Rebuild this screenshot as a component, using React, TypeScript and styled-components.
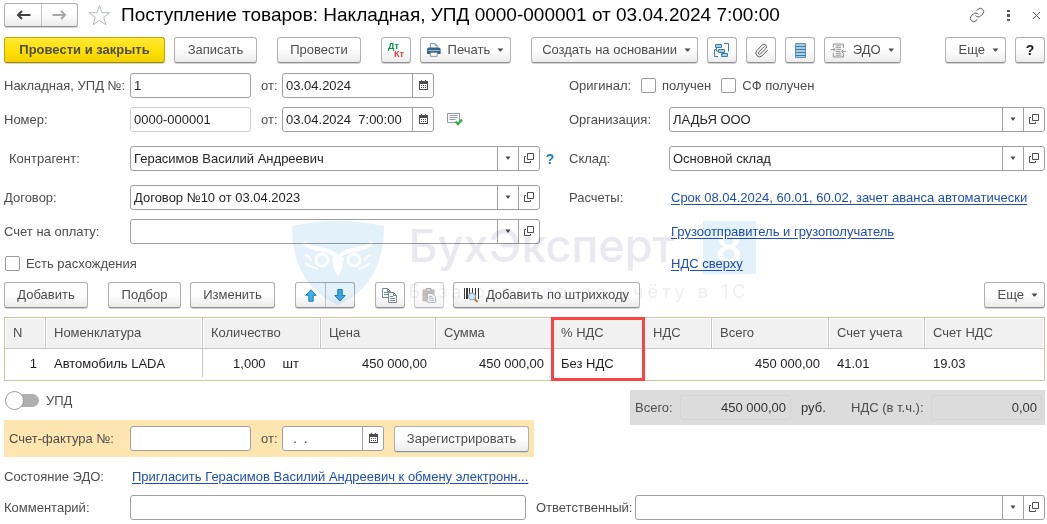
import React from "react";
import styled, { createGlobalStyle, css } from "styled-components";
import { Link as LinkGlyph, Paperclip } from "lucide-react";

const GlobalStyle = createGlobalStyle`
  *, *::before, *::after { box-sizing: border-box; }
  body {
    margin: 0;
    background: #fff;
    color: #4d4d4d;
    font: 13px/16px "Liberation Sans", Arial, sans-serif;
  }
  button, input { font: inherit; color: inherit; margin: 0; }
`;

/* ---------- layout ---------- */

const Page = styled.main`
  position: relative;
  padding: 3px 2px 4px 4px;
`;

const Bar = styled.div<{ $top?: number }>`
  display: flex;
  align-items: center;
  margin-top: ${(p) => p.$top ?? 0}px;
`;

const Group = styled.div<{ $after?: number }>`
  display: flex;
  gap: 9px;
  margin-right: ${(p) => p.$after ?? 20}px;
`;

const Spacer = styled.div`
  flex: 1;
`;

const Columns = styled.div`
  display: grid;
  grid-template-columns: minmax(0, 565fr) minmax(0, 476fr);
  margin-top: 10px;
`;

const Row = styled.div<{ $top?: number }>`
  display: flex;
  align-items: center;
  height: 25px;
  margin-top: ${(p) => p.$top ?? 0}px;
`;

const Label = styled.label<{ $width?: number; $indent?: boolean }>`
  flex: none;
  width: ${(p) => (p.$width ? `${p.$width}px` : "auto")};
  padding-left: ${(p) => (p.$indent ? 5 : 0)}px;
  white-space: nowrap;
`;

const FromLabel = styled(Label)`
  width: 31px;
  padding-left: 10px;
`;

/* ---------- buttons ---------- */

const Button = styled.button<{ $width?: number; $primary?: boolean }>`
  display: inline-flex;
  flex: none;
  align-items: center;
  justify-content: center;
  gap: 7px;
  width: ${(p) => p.$width ?? 30}px;
  height: 26px;
  padding: 0;
  border: 1px solid #b0b0b0;
  border-bottom-color: #8f8f8f;
  border-radius: 3px;
  background: linear-gradient(#fff 45%, #ececec);
  box-shadow: 0 1px 0 #d4d4d4;
  white-space: nowrap;
  &:disabled { opacity: 0.6; }
  ${(p) =>
    p.$primary &&
    css`
      border-color: #c4a800;
      border-bottom-color: #a08a00;
      background: linear-gradient(#ffe936, #ffdf00 60%, #f0d000);
      font-weight: bold;
    `}
`;

const MenuButton = styled(Button)`
  justify-content: flex-end;
  padding: 0 6px;
`;

const Segments = styled.div<{ $tall?: boolean }>`
  display: flex;
  height: ${(p) => (p.$tall ? 26 : 24)}px;
  border: 1px solid #b0b0b0;
  border-bottom-color: #8f8f8f;
  border-radius: 3px;
  background: linear-gradient(#fff 45%, #ececec);
  box-shadow: 0 1px 0 #d4d4d4;
`;

const Segment = styled.button<{ $width: number }>`
  display: flex;
  align-items: center;
  justify-content: center;
  width: ${(p) => p.$width}px;
  padding: 0;
  border: 0;
  background: none;
  & + & { border-left: 1px solid #c4c4c4; }
`;

const PlainButton = styled.button`
  display: flex;
  align-items: center;
  justify-content: center;
  padding: 0;
  border: 0;
  background: none;
`;

const StarButton = styled(PlainButton)`
  margin: 0 10px;
`;

const StatusButton = styled(PlainButton)`
  margin-left: 13px;
`;

const HelpButton = styled(PlainButton)`
  width: 20px;
  color: #1a7bb9;
  font-size: 14px;
  font-weight: bold;
`;

const WindowTools = styled.div`
  display: flex;
  align-items: center;
  gap: 19px;
  padding-right: 4px;
`;

const Title = styled.h1`
  margin: 0;
  color: #000;
  font-size: 19px;
  line-height: 24px;
  font-weight: normal;
  white-space: nowrap;
`;

const Question = styled.span`
  color: #1a1a1a;
  font-size: 14px;
  font-weight: bold;
`;

const DebitCredit = styled.span`
  display: grid;
  width: 16px;
  color: #009646;
  font-size: 9px;
  line-height: 8px;
  font-weight: bold;
  text-align: left;
  span { color: #e0393e; text-align: right; }
`;

/* ---------- fields ---------- */

const FieldBox = styled.div<{ $width?: number; $muted?: boolean }>`
  display: flex;
  flex: ${(p) => (p.$width ? "none" : "1 1 0")};
  width: ${(p) => (p.$width ? `${p.$width}px` : "auto")};
  min-width: 0;
  height: 25px;
  border: 1px solid ${(p) => (p.$muted ? "#d2d2d2" : "#a0a0a0")};
  border-radius: 3px;
  background: #fff;
`;

const FieldInput = styled.input`
  flex: 1;
  min-width: 0;
  padding: 0 3px;
  border: 0;
  outline: 0;
  background: none;
  color: #262626;
`;

const FieldButton = styled.button`
  display: flex;
  flex: none;
  align-items: center;
  justify-content: center;
  width: 21px;
  padding: 0 0 2px;
  border: 0;
  border-left: 1px solid #a0a0a0;
  background: none;
`;

const Check = styled.input`
  appearance: none;
  flex: none;
  width: 15px;
  height: 15px;
  border: 1px solid #9a9a9a;
  border-radius: 2px;
  background: #fff;
`;

const CheckLabel = styled.label<{ $after?: number }>`
  display: flex;
  align-items: center;
  gap: 6px;
  margin-right: ${(p) => p.$after ?? 0}px;
  padding-left: 1px;
  white-space: nowrap;
`;

const Anchor = styled.a`
  padding-left: 2px;
  color: #1f4fb5;
  text-decoration: underline;
  text-underline-offset: 2px;
  white-space: nowrap;
`;

/* ---------- goods table ---------- */

const Goods = styled.table`
  width: 100%;
  margin-top: 9px;
  border: 1px solid #cdc6a6;
  border-collapse: separate;
  border-spacing: 0;
  table-layout: fixed;
`;

const HeadCell = styled.th<{ $marked?: boolean }>`
  position: relative;
  height: 31px;
  padding: 0 8px;
  border-right: 1px solid #c8c8c8;
  border-bottom: 1px solid #c8c8c8;
  background: #f1f1f1;
  box-shadow: inset 1px 1px 0 #fff, inset -1px 0 0 #fff;
  font-weight: normal;
  text-align: left;
  &:last-child { border-right: 0; }
  ${(p) =>
    p.$marked &&
    css`
      &::after {
        content: "";
        position: absolute;
        top: -1px;
        left: -2px;
        right: -1px;
        height: 64px;
        border: 3px solid #fc4343;
      }
    `}
`;

const Cell = styled.td<{ $right?: boolean; $ruled?: boolean }>`
  height: 31px;
  padding: 0 9px 2px 8px;
  color: #1f1f1f;
  text-align: ${(p) => (p.$right ? "right" : "left")};
  white-space: nowrap;
  ${(p) =>
    p.$ruled &&
    css`
      background: linear-gradient(#c8c8c8, #c8c8c8) right top / 1px 28px no-repeat;
    `}
`;

const Quantity = styled.span`
  display: flex;
  gap: 17px;
  justify-content: flex-end;
  padding-right: 13px;
`;

/* ---------- lower part ---------- */

const Lower = styled.div`
  display: flex;
  align-items: flex-start;
  justify-content: space-between;
  margin-top: 9px;
`;

const SwitchLabel = styled.label`
  display: flex;
  align-items: center;
  gap: 7px;
  height: 21px;
  padding-left: 1px;
`;

const Switch = styled.input`
  appearance: none;
  position: relative;
  display: flex;
  align-items: center;
  width: 34px;
  height: 19px;
  &::before {
    content: "";
    width: 34px;
    height: 13px;
    border-radius: 7px;
    background: #b0b0b0;
  }
  &::after {
    content: "";
    position: absolute;
    left: 0;
    width: 19px;
    height: 19px;
    border: 1px solid #a0a0a0;
    border-radius: 50%;
    background: #fff;
  }
`;

const InvoicePanel = styled.div`
  display: flex;
  align-items: center;
  height: 37px;
  margin-top: 9px;
  padding-right: 5px;
  background: #ffe6b0;
`;

const InvoiceAction = styled.div`
  display: flex;
  margin-left: 10px;
`;

const Totals = styled.div`
  display: flex;
  align-items: center;
  height: 35px;
  padding: 0 3px 0 5px;
  background: #dcdcdc;
`;

const TotalInput = styled.input`
  width: 111px;
  height: 25px;
  padding: 0 4px;
  border: 1px solid #d5d5d5;
  border-radius: 3px;
  background: none;
  color: #333;
  text-align: right;
`;

const Unit = styled.span`
  width: 60px;
  padding-left: 10px;
  color: #333;
`;

const Footer = styled.div`
  display: grid;
  grid-template-columns: minmax(0, 522fr) minmax(0, 509fr);
  gap: 10px;
  margin-top: 6px;
`;

/* ---------- watermark ---------- */

const Watermark = styled.div`
  position: absolute;
  top: 221px;
  left: 0;
  right: 0;
  display: flex;
  justify-content: center;
  gap: 25px;
  mix-blend-mode: multiply;
  pointer-events: none;
`;

const BrandText = styled.div`
  width: 347px;
  color: #e9e9ef;
  font-family: Inter, sans-serif;
`;

const BrandLine = styled.div`
  display: flex;
  justify-content: space-between;
  font-size: 45px;
  line-height: 49px;
  font-weight: 500;
  white-space: nowrap;
`;

const BrandDigit = styled.span`
  width: 53px;
  height: 53px;
  background: #e3f1fa;
  color: #fff;
  font-weight: 600;
  font-size: 42px;
  line-height: 53px;
  text-align: center;
`;

const Slogan = styled.div`
  margin-top: 4px;
  color: #efeff3;
  font-size: 18px;
  line-height: 28px;
  letter-spacing: 4px;
  white-space: nowrap;
`;

/* ---------- drawings ---------- */

const Caret = () => (
  <svg width="7" height="4" viewBox="0 0 7 4" aria-hidden="true">
    <path d="M0.500 0.500h6L4 3.500H3z" fill="#4d4d4d" />
  </svg>
);

const SmallCaret = () => (
  <svg width="6" height="4" viewBox="0 0 6 4" aria-hidden="true">
    <path d="M0.500 0.500h5L3.500 3.500h-1z" fill="#4d4d4d" />
  </svg>
);

const OpenIcon = () => (
  <svg width="10" height="10" viewBox="0 0 10 10" fill="none" stroke="#4d4d4d" aria-hidden="true">
    <path d="M3.500 0.500h6v6h-6z" />
    <path d="M2 3.500H0.500v6h6V8" />
  </svg>
);

const CalendarIcon = () => (
  <svg width="9" height="10" viewBox="0 0 9 10" aria-hidden="true">
    <path d="M0 1h9v9H0z" fill="#4d4d4d" />
    <path d="M1 4h7v5H1z" fill="#fff" />
    <path d="M2 0h1v2H2zM6 0h1v2H6z" fill="#4d4d4d" />
    <path d="M2 5h1v1H2zM4 5h1v1H4zM6 5h1v1H6zM2 7h1v1H2zM4 7h1v1H4zM6 7h1v1H6z" fill="#4d4d4d" />
  </svg>
);

const Arrow = ({ back, color }: { back?: boolean; color: string }) => (
  <svg width="15" height="10" viewBox="0 0 15 10" fill="none" stroke={color} strokeWidth="2" aria-hidden="true">
    {back ? <path d="M14.500 5H2M6 1L2 5l4 4" /> : <path d="M.5 5H13M9 1l4 4-4 4" />}
  </svg>
);

const Star = () => (
  <svg width="23" height="22" viewBox="0 0 23 22" fill="#fff" stroke="#b4b9be" aria-hidden="true">
    <path d="M11.500 1.500l2.600 7.200h7.700l-6.100 4.600 2.300 7.500-6.500-4.500-6.500 4.500 2.300-7.500L1.200 8.700h7.700z" />
  </svg>
);

const MoveArrow = ({ down }: { down?: boolean }) => (
  <svg width="12" height="13" viewBox="0 0 12 13" aria-hidden="true">
    <path
      d={down ? "M6 12L.8 6.500h3v-6h4.400v6h3z" : "M6 .8L.8 6.300h3v6h4.400v-6h3z"}
      fill="#3fb0ee"
      stroke="#1b7fb8"
    />
  </svg>
);

const PrinterIcon = () => (
  <svg width="14" height="14" viewBox="0 0 14 14" aria-hidden="true">
    <path d="M3.500 5V.5h5l2 2V5" fill="#fff" stroke="#7d93a6" />
    <path d="M8.500.5v2h2" fill="none" stroke="#7d93a6" />
    <path d="M2 4.500h10a2 2 0 0 1 2 2V11H0V6.500a2 2 0 0 1 2-2z" fill="#36648b" />
    <path d="M1 7.500h12" stroke="#9fc0d8" />
    <path d="M3.500 9.500h7v4h-7z" fill="#fff" stroke="#7d93a6" />
  </svg>
);

const StructureIcon = () => (
  <svg width="16" height="15" viewBox="0 0 16 15" fill="#a9cde2" stroke="#3d7ea6" aria-hidden="true">
    <path d="M1.500 1.500h6v3h-6zM4.500 6.500h6v3h-6zM7.500 10.500h6v3h-6z" />
    <path d="M10 .5h4.500v8M4 13.500H.5V6.500H2M2.500 4.500V8h2M8.500 9.500v2" fill="none" />
  </svg>
);

const RegisterIcon = () => (
  <svg width="11" height="15" viewBox="0 0 11 15" aria-hidden="true">
    <path d="M.5.5h10v14H.5z" fill="#a9cde2" stroke="#5d93b5" />
    <path d="M.5 3.500h10M.5 6.500h10M.5 9.500h10M.5 12.500h10" stroke="#3d7ea6" />
  </svg>
);

const ExchangeIcon = () => (
  <svg width="16" height="15" viewBox="0 0 16 15" fill="none" stroke="#8a8a8a" aria-hidden="true">
    <path d="M2.500 4V.5h11V5M2.500 10v4.500h11V11" />
    <path d="M5 2.500h6M5 4.500h6M6 6.500h5M5 8.500h5M5 10.500h6M5 12.500h6" />
    <path d="M0 6.500h4.500M2.500 4.500l2 2-2 2M16 8.500h-4.500M13.500 6.500l-2 2 2 2" />
  </svg>
);

const StatusIcon = () => (
  <svg width="16" height="13" viewBox="0 0 16 13" fill="none" aria-hidden="true">
    <path d="M.5.5h12v9H.5z" fill="#fff" stroke="#8d9cab" />
    <path d="M2.500 2.500h8M2.500 4.500h8M2.500 6.500h6" stroke="#8d9cab" />
    <path d="M8.500 8.500l2.500 2.500 4-4.500" stroke="#2fb24c" strokeWidth="2.400" />
  </svg>
);

const CopyIcon = () => (
  <svg width="16" height="15" viewBox="0 0 16 15" fill="#fff" stroke="#71879a" aria-hidden="true">
    <path d="M.5.5h5l3 3v6h-8z" />
    <path d="M5.500.5v3h3M2 4.500h4M2 6.500h4" fill="none" />
    <path d="M6.500 4.500h5l3 3v7h-8z" />
    <path d="M11.500 4.500v3h3M8 8.500h3M8 10.500h5M8 12.500h5" fill="none" />
  </svg>
);

const PasteIcon = () => (
  <svg width="15" height="15" viewBox="0 0 15 15" aria-hidden="true">
    <path d="M1 2h11v11H1z" fill="#a89c96" stroke="#8d827d" />
    <path d="M4 .5h5v3H4z" fill="#c9c9c9" stroke="#8a8a8a" />
    <path d="M5.500 5.500h5l3 3v6h-8z" fill="#eef1f4" stroke="#8794a0" />
    <path d="M7 8.500h3M7 10.500h5M7 12.500h5" stroke="#8794a0" />
  </svg>
);

const BarcodeIcon = () => (
  <svg width="15" height="16" viewBox="0 0 15 16" fill="none" aria-hidden="true">
    <path d="M.5 1v11M5.500 1v11M8.500 1v5M11.500 1v11M14.500 1v11" stroke="#3a3a3a" />
    <path d="M3 1v11" stroke="#3a3a3a" strokeWidth="2" />
    <path d="M10.500 12l3 3" stroke="#b5793f" strokeWidth="2" />
    <circle cx="8" cy="9.500" r="3.500" fill="#cfe6f5" stroke="#8aa4b8" />
  </svg>
);

const Shield = () => (
  <svg width="92" height="84" viewBox="0 0 92 84" aria-hidden="true">
    <path d="M0 5Q24 0 46 0t46 5C92 42 78 70 46 84 14 70 0 42 0 5z" fill="#e3f1fa" />
    <g fill="none" stroke="#fff" strokeWidth="4">
      <path d="M12 21c4 7 14 6 24 9 6 2 8 4 10 7 2-3 4-5 10-7 10-3 20-2 24-9" />
      <circle cx="30" cy="39" r="6" strokeWidth="3" />
      <circle cx="62" cy="39" r="6" strokeWidth="3" />
      <path d="M13 34c4 1 6 3 6 6M14 42c4 4 8 5 12 6M79 34c-4 1-6 3-6 6M78 42c-4 4-8 5-12 6" strokeWidth="2" />
    </g>
    <path d="M40 37l6-4 6 4-2 12-4 6-4-6z" fill="#fff" />
  </svg>
);

/* ---------- composite fields ---------- */

type FieldProps = { id: string; value?: string };

const ChoiceField = ({ id, value = "" }: FieldProps) => (
  <FieldBox>
    <FieldInput id={id} defaultValue={value} />
    <FieldButton aria-label="Выбрать"><SmallCaret /></FieldButton>
    <FieldButton aria-label="Открыть"><OpenIcon /></FieldButton>
  </FieldBox>
);

const DateField = ({ id, value, width = 152 }: FieldProps & { width?: number }) => (
  <FieldBox $width={width}>
    <FieldInput id={id} defaultValue={value} />
    <FieldButton aria-label="Календарь"><CalendarIcon /></FieldButton>
  </FieldBox>
);

const columns: [string, number][] = [
  ["N", 41],
  ["Номенклатура", 157],
  ["Количество", 118],
  ["Цена", 115],
  ["Сумма", 117],
  ["% НДС", 92],
  ["НДС", 67],
  ["Всего", 117],
  ["Счет учета", 96],
  ["Счет НДС", 119],
];

export default function App() {
  return (
    <Page>
      <GlobalStyle />

      <Bar as="header">
        <Segments>
          <Segment $width={36} aria-label="Назад"><Arrow back color="#404040" /></Segment>
          <Segment $width={36} aria-label="Вперед"><Arrow color="#a8a8a8" /></Segment>
        </Segments>
        <StarButton aria-label="В избранное"><Star /></StarButton>
        <Title>Поступление товаров: Накладная, УПД 0000-000001 от 03.04.2024 7:00:00</Title>
        <Spacer />
        <WindowTools>
          <PlainButton aria-label="Ссылка"><LinkGlyph size={16} strokeWidth={1.5} color="#5a5a5a" /></PlainButton>
          <PlainButton aria-label="Меню">
            <svg width="9" height="11" viewBox="0 0 9 11" fill="#5a5a5a">
              <path d="M3 0h3v2H3zM3 4h3v3H3zM3 9h3v2H3z" />
            </svg>
          </PlainButton>
          <PlainButton aria-label="Закрыть">
            <svg width="9" height="9" viewBox="0 0 9 9" stroke="#5a5a5a">
              <path d="M1 1l7 7M8 1L1 8" />
            </svg>
          </PlainButton>
        </WindowTools>
      </Bar>

      <Bar $top={10}>
        <Group>
          <Button $primary $width={161}>Провести и закрыть</Button>
          <Button $width={83}>Записать</Button>
        </Group>
        <Group><Button $width={84}>Провести</Button></Group>
        <Group>
          <Button aria-label="Дт/Кт"><DebitCredit>Дт<span>Кт</span></DebitCredit></Button>
          <MenuButton $width={91}><PrinterIcon />Печать<Caret /></MenuButton>
        </Group>
        <Group>
          <MenuButton $width={167}>Создать на основании<Caret /></MenuButton>
          <Button aria-label="Структура подчиненности"><StructureIcon /></Button>
          <Button aria-label="Присоединенные файлы"><Paperclip size={15} strokeWidth={1.5} /></Button>
          <Button aria-label="Регистр"><RegisterIcon /></Button>
          <MenuButton $width={77}><ExchangeIcon />ЭДО<Caret /></MenuButton>
        </Group>
        <Spacer />
        <Group $after={0}>
          <MenuButton $width={61}>Еще<Caret /></MenuButton>
          <Button aria-label="Справка"><Question>?</Question></Button>
        </Group>
      </Bar>

      <Columns>
        <div>
          <Row>
            <Label htmlFor="invoice" $width={126}>Накладная, УПД №:</Label>
            <FieldBox $width={121}><FieldInput id="invoice" defaultValue="1" /></FieldBox>
            <FromLabel htmlFor="invoiceDate">от:</FromLabel>
            <DateField id="invoiceDate" value="03.04.2024" />
          </Row>
          <Row $top={9}>
            <Label htmlFor="number" $width={126}>Номер:</Label>
            <FieldBox $width={121} $muted><FieldInput id="number" readOnly defaultValue="0000-000001" /></FieldBox>
            <FromLabel htmlFor="numberDate">от:</FromLabel>
            <DateField id="numberDate" value={"03.04.2024\u00a0 7:00:00"} />
            <StatusButton aria-label="Состояние"><StatusIcon /></StatusButton>
          </Row>
          <Row $top={14}>
            <Label htmlFor="partner" $width={126} $indent>Контрагент:</Label>
            <ChoiceField id="partner" value="Герасимов Василий Андреевич" />
            <HelpButton aria-label="Подсказка">?</HelpButton>
            <Label as="span" $width={9} />
          </Row>
          <Row $top={14}>
            <Label htmlFor="contract" $width={126}>Договор:</Label>
            <ChoiceField id="contract" value="Договор №10 от 03.04.2023" />
            <Label as="span" $width={29} />
          </Row>
          <Row $top={9}>
            <Label htmlFor="bill" $width={126}>Счет на оплату:</Label>
            <ChoiceField id="bill" />
            <Label as="span" $width={29} />
          </Row>
          <Row $top={7}>
            <CheckLabel><Check type="checkbox" />Есть расхождения</CheckLabel>
          </Row>
        </div>
        <div>
          <Row>
            <Label as="span" $width={71}>Оригинал:</Label>
            <CheckLabel $after={9}><Check type="checkbox" />получен</CheckLabel>
            <CheckLabel><Check type="checkbox" />СФ получен</CheckLabel>
          </Row>
          <Row $top={9}>
            <Label htmlFor="company" $width={100}>Организация:</Label>
            <ChoiceField id="company" value="ЛАДЬЯ ООО" />
          </Row>
          <Row $top={14}>
            <Label htmlFor="store" $width={100}>Склад:</Label>
            <ChoiceField id="store" value="Основной склад" />
          </Row>
          <Row $top={14}>
            <Label as="span" $width={100}>Расчеты:</Label>
            <Anchor href="#terms">Срок 08.04.2024, 60.01, 60.02, зачет аванса автоматически</Anchor>
          </Row>
          <Row $top={9}>
            <Label as="span" $width={100} />
            <Anchor href="#shipper">Грузоотправитель и грузополучатель</Anchor>
          </Row>
          <Row $top={7}>
            <Label as="span" $width={100} />
            <Anchor href="#vat">НДС сверху</Anchor>
          </Row>
        </div>
      </Columns>

      <Bar $top={6}>
        <Group><Button $width={84}>Добавить</Button></Group>
        <Group>
          <Button $width={73}>Подбор</Button>
          <Button $width={85}>Изменить</Button>
        </Group>
        <Group>
          <Segments $tall>
            <Segment $width={29} aria-label="Вверх"><MoveArrow /></Segment>
            <Segment $width={29} aria-label="Вниз"><MoveArrow down /></Segment>
          </Segments>
        </Group>
        <Group>
          <Button aria-label="Копировать"><CopyIcon /></Button>
          <Button aria-label="Вставить" disabled><PasteIcon /></Button>
          <Button $width={187}><BarcodeIcon />Добавить по штрихкоду</Button>
        </Group>
        <Spacer />
        <MenuButton $width={61}>Еще<Caret /></MenuButton>
      </Bar>

      <Goods>
        <colgroup>
          {columns.map(([name, width]) => <col key={name} width={width} />)}
        </colgroup>
        <thead>
          <tr>
            {columns.map(([name]) => (
              <HeadCell key={name} $marked={name === "% НДС"}>{name}</HeadCell>
            ))}
          </tr>
        </thead>
        <tbody>
          <tr>
            <Cell $right>1</Cell>
            <Cell $ruled>Автомобиль LADA</Cell>
            <Cell><Quantity><span>1,000</span><span>шт</span></Quantity></Cell>
            <Cell $right>450 000,00</Cell>
            <Cell $right>450 000,00</Cell>
            <Cell>Без НДС</Cell>
            <Cell />
            <Cell $right>450 000,00</Cell>
            <Cell>41.01</Cell>
            <Cell>19.03</Cell>
          </tr>
        </tbody>
      </Goods>

      <Lower>
        <div>
          <SwitchLabel><Switch type="checkbox" role="switch" />УПД</SwitchLabel>
          <InvoicePanel>
            <Label htmlFor="facture" $width={126} $indent>Счет-фактура №:</Label>
            <FieldBox $width={121}><FieldInput id="facture" /></FieldBox>
            <FromLabel htmlFor="factureDate">от:</FromLabel>
            <DateField id="factureDate" value={"\u00a0 .\u00a0 ."} width={102} />
            <InvoiceAction><Button $width={135}>Зарегистрировать</Button></InvoiceAction>
          </InvoicePanel>
        </div>
        <Totals>
          <Label htmlFor="total" $width={45}>Всего:</Label>
          <TotalInput id="total" readOnly defaultValue="450 000,00" />
          <Unit>руб.</Unit>
          <Label htmlFor="vatTotal" $width={80}>НДС (в т.ч.):</Label>
          <TotalInput id="vatTotal" readOnly defaultValue="0,00" />
        </Totals>
      </Lower>

      <Row $top={7}>
        <Label as="span" $width={126}>Состояние ЭДО:</Label>
        <Anchor href="#edo">Пригласить Герасимов Василий Андреевич к обмену электронн...</Anchor>
      </Row>

      <Footer>
        <Row>
          <Label htmlFor="comment" $width={126}>Комментарий:</Label>
          <FieldBox><FieldInput id="comment" /></FieldBox>
        </Row>
        <Row>
          <Label htmlFor="owner" $width={99}>Ответственный:</Label>
          <ChoiceField id="owner" />
        </Row>
      </Footer>

      <Watermark aria-hidden="true">
        <Shield />
        <BrandText>
          <BrandLine>БухЭксперт<BrandDigit>8</BrandDigit></BrandLine>
          <Slogan>База ответов по учёту в 1С</Slogan>
        </BrandText>
      </Watermark>
    </Page>
  );
}
